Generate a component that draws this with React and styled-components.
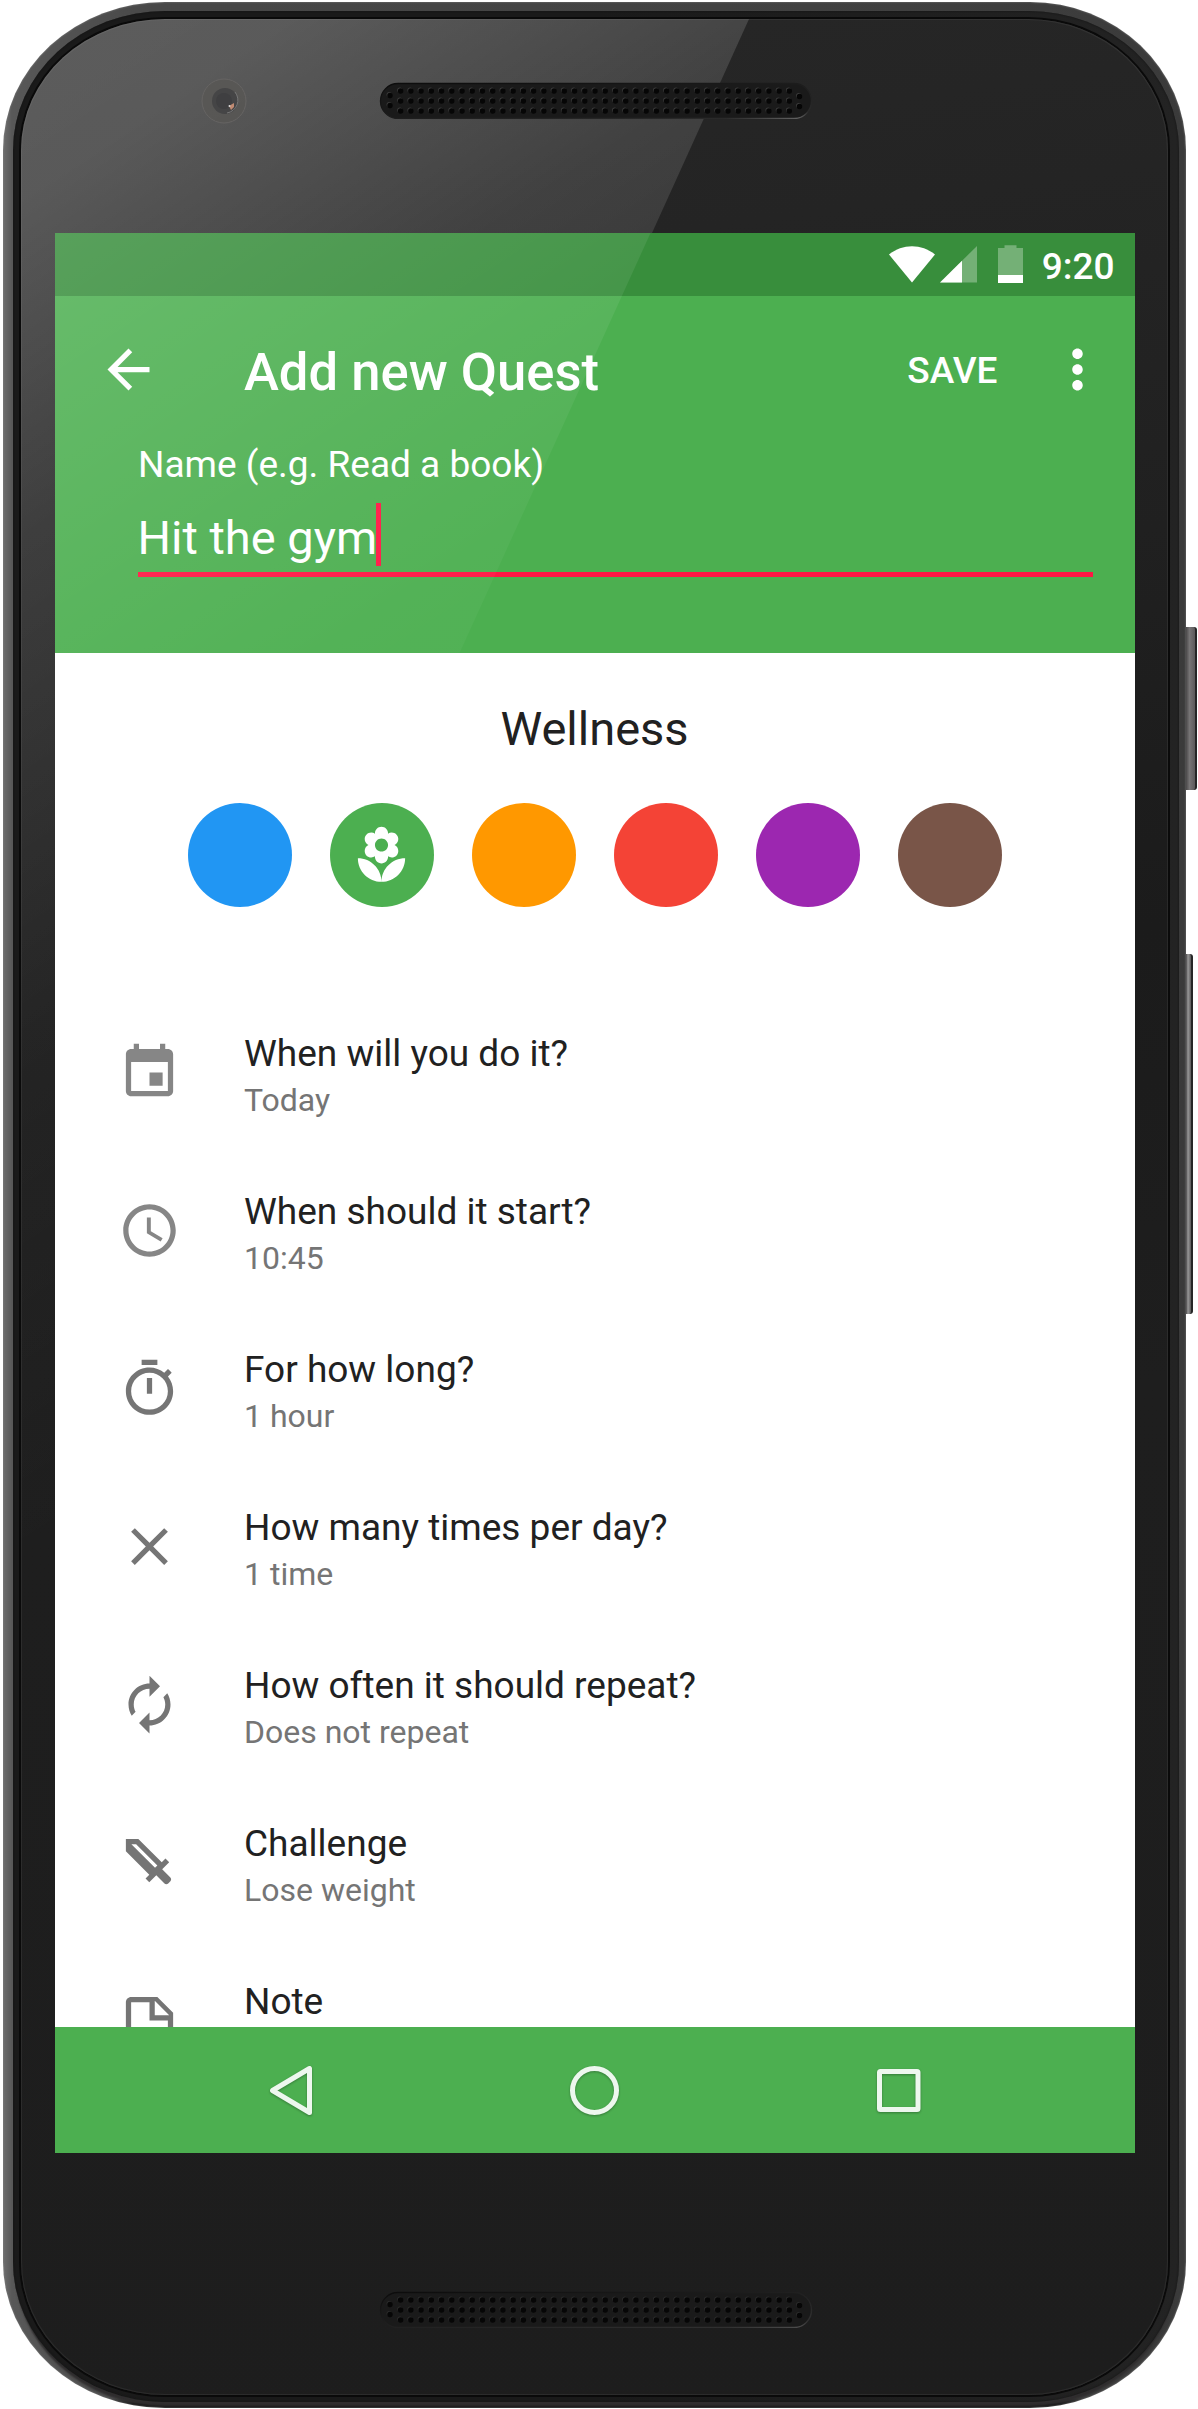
import React from 'react';
import styled, { createGlobalStyle } from 'styled-components';

const GlobalStyle = createGlobalStyle`
  *, *::before, *::after { box-sizing: border-box; }
  body {
    margin: 0;
    background: #fff;
    font-family: Roboto, "Liberation Sans", sans-serif;
  }
`;

/* ---------- device ---------- */

const Page = styled.main`
  display: flex;
  width: 1198px;
  height: 2409px;
  padding: 2px 0 0 3px;
  overflow: hidden;
`;

const Rim = styled.div`
  flex: none;
  width: 1183px;
  height: 2406px;
  padding: 9px 7px 6px 10px;
  border-radius: 162px 156px 156px 162px / 148px 148px 146px 146px;
  background:
    linear-gradient(to bottom, transparent 2396px, #161616 2402px),
    linear-gradient(to right, #6e6e6e 0, #585858 9px, #484848 150px, #404040 900px, #3a3a3a 100%);
  box-shadow: inset 0 0 2px #8a8a8a;
`;

const Gasket = styled.div`
  height: 100%;
  padding: 8px 11px 7px 8px;
  border-radius: 152px 150px 150px 152px / 139px 139px 140px 140px;
  background: linear-gradient(to right, #1a1a1a 0 50%, #232323 100%);
  box-shadow: inset 0 0 2px #111, 0 6px 2px -2px #2f2d2e;
`;

const Glass = styled.div`
  position: relative;
  display: flex;
  flex-direction: column;
  align-items: center;
  height: 100%;
  border-radius: 144px 140px 140px 144px / 131px 131px 133px 133px;
  background: linear-gradient(172deg, #272727 0, #222 20%, #1b1b1b 42%, #1e1e1e 60%, #1d1d1d 100%);
  box-shadow: 0 0 0 2px #0a0a0a, inset 0 0 1px 1px rgba(255, 255, 255, 0.07);
`;

const GlassGlare = styled.div`
  position: absolute;
  top: 0;
  left: 0;
  width: 728px;
  height: 1606px;
  border-top-left-radius: 144px 131px;
  clip-path: polygon(0 0, 100% 0, 0 100%);
  background: linear-gradient(
    147deg,
    rgba(255, 255, 255, 0.25) 0,
    rgba(255, 255, 255, 0.24) 150px,
    rgba(255, 255, 255, 0.13) 430px,
    rgba(255, 255, 255, 0.04) 860px,
    rgba(255, 255, 255, 0) 1300px
  );
`;

const TopBezel = styled.div`
  position: relative;
  display: flex;
  flex: none;
  align-items: flex-start;
  width: 1080px;
  height: 214px;
`;

const CameraArt = styled.svg`
  flex: none;
  width: 48px;
  height: 48px;
  margin: 58px 0 0 145px;
`;

const GrilleArt = styled.svg`
  display: block;
  flex: none;
  width: 436px;
  height: 40px;
`;

const EarpieceSlot = styled.div`
  margin: 60px 0 0 130px;
`;

const BottomBezel = styled.div`
  flex: 1;
  display: flex;
  width: 1080px;
  padding: 135px 0 0 323px;
`;

const SideRail = styled.div`
  display: flex;
  flex: none;
  flex-direction: column;
  gap: 164px;
  padding-top: 625px;
`;

const SideButton = styled.div`
  width: ${(p) => p.$width}px;
  height: ${(p) => p.$height}px;
  border-right: ${(p) => p.$edge}px solid #262626;
  border-radius: 0 3px 3px 0;
  background: linear-gradient(to right, #4a4849, ${(p) => p.$tone} 40%, #5c5a5b);
`;

/* ---------- screen ---------- */

const Screen = styled.section`
  position: relative;
  display: flex;
  flex: none;
  flex-direction: column;
  width: 1080px;
  height: 1920px;
  overflow: hidden;
  background: #fff;
`;

const ScreenGlare = styled.div`
  position: absolute;
  top: 0;
  left: 0;
  width: 596px;
  height: 420px;
  pointer-events: none;
  clip-path: polygon(0 0, 596px 0, 405px 100%, 0 100%);
  background: linear-gradient(
    147deg,
    rgba(255, 255, 255, 0.16) 0,
    rgba(255, 255, 255, 0.075) 340px,
    rgba(255, 255, 255, 0.04) 500px,
    rgba(255, 255, 255, 0.02) 700px
  );
`;

const StatusBar = styled.div`
  display: flex;
  flex: none;
  align-items: center;
  justify-content: flex-end;
  height: 63px;
  padding-right: 20px;
  background: #388e3c;
`;

const StatusArt = styled.svg`
  width: 136px;
  height: 63px;
`;

const Clock = styled.time`
  margin-left: 17px;
  padding-top: 4px;
  color: #fff;
  font-size: 37px;
  font-weight: 500;
  line-height: 43px;
`;

const Header = styled.header`
  flex: none;
  height: 357px;
  background: #4caf50;
  color: #fff;
`;

const Toolbar = styled.div`
  display: flex;
  align-items: center;
  height: 147px;
  padding: 0 26px 0 42px;
`;

const Icon = styled.svg`
  display: block;
  flex: none;
  width: 63px;
  height: 63px;
  fill: ${(p) => p.$color || '#fff'};
  fill-rule: evenodd;
`;

const Title = styled.h1`
  flex: 1;
  margin: 0 0 0 84.5px;
  padding-top: 4px;
  font-size: 52.6px;
  font-weight: 500;
  line-height: 62px;
`;

const SaveButton = styled.button`
  margin: 0 48px 0 0;
  padding: 2px 0 0;
  border: 0;
  background: none;
  color: #fff;
  font: 500 37px/43px Roboto, "Liberation Sans", sans-serif;
`;

const Field = styled.div`
  width: 955px;
  margin-left: 83px;
  border-bottom: 5px solid #ff1744;
`;

const FieldLabel = styled.div`
  height: 60px;
  padding-left: 0.5px;
  font-size: 37px;
  line-height: 43px;
`;

const FieldValue = styled.div`
  display: flex;
  align-items: center;
  height: 63px;
  margin-bottom: 6px;
  font-size: 47px;
  line-height: 55px;
`;

const FieldText = styled.span`
  padding-top: 5px;
`;

const Caret = styled.span`
  width: 5px;
  height: 63px;
  margin-left: -1px;
  background: #ff1744;
`;

const Category = styled.div`
  display: flex;
  flex: none;
  flex-direction: column;
  align-items: center;
  height: 340px;
  padding-top: 48px;
`;

const CategoryName = styled.h2`
  margin: 0;
  color: #212121;
  font-size: 47px;
  font-weight: 400;
  line-height: 56px;
`;

const Swatches = styled.div`
  display: flex;
  gap: 38px;
  margin-top: 46px;
`;

const Swatch = styled.button`
  display: flex;
  align-items: center;
  justify-content: center;
  width: 104px;
  height: 104px;
  padding: 0;
  border: 0;
  border-radius: 50%;
  background: ${(p) => p.$color};
`;

const Options = styled.ul`
  flex: 1;
  min-height: 0;
  margin: 0;
  padding: 0;
  overflow: hidden;
  list-style: none;
`;

const Option = styled.li`
  display: flex;
  align-items: center;
  height: 158px;
  padding-left: 63px;
`;

const OptionText = styled.div`
  margin-left: 63.5px;
  padding-top: 9px;
`;

const OptionTitle = styled.div`
  color: #212121;
  font-size: 37px;
  line-height: 43px;
`;

const OptionValue = styled.div`
  margin-top: 4px;
  color: #757575;
  font-size: 32px;
  line-height: 43px;
`;

const NavBar = styled.nav`
  display: flex;
  flex: none;
  align-items: center;
  justify-content: space-between;
  height: 126px;
  padding: 0 205px;
  background: #4caf50;
`;

const NavIcon = styled.svg`
  width: 63px;
  height: 63px;
  fill: none;
  stroke: #edf7ee;
  stroke-width: 5;
  filter: drop-shadow(0 1px 1px rgba(0, 0, 0, 0.3));
`;

/* ---------- data ---------- */

const PATHS = {
  back: 'M20 11H7.83l5.59-5.59L12 4l-8 8 8 8 1.41-1.41L7.83 13H20v-2z',
  more: 'M12 8c1.1 0 2-.9 2-2s-.9-2-2-2-2 .9-2 2 .9 2 2 2zm0 2c-1.1 0-2 .9-2 2s.9 2 2 2 2-.9 2-2-.9-2-2-2zm0 6c-1.1 0-2 .9-2 2s.9 2 2 2 2-.9 2-2-.9-2-2-2z',
  florist:
    'M12 22c4.97 0 9-4.03 9-9-4.97 0-9 4.03-9 9zM5.6 10.25c0 1.38 1.12 2.5 2.5 2.5.53 0 1.01-.16 1.42-.44l-.02.19c0 1.38 1.12 2.5 2.5 2.5s2.5-1.12 2.5-2.5l-.02-.19c.4.28.89.44 1.42.44 1.38 0 2.5-1.12 2.5-2.5 0-1-.59-1.85-1.43-2.25.84-.4 1.43-1.25 1.43-2.25 0-1.38-1.12-2.5-2.5-2.5-.53 0-1.01.16-1.42.44l.02-.19C14.5 2.12 13.38 1 12 1S9.5 2.12 9.5 3.5l.02.19c-.4-.28-.89-.44-1.42-.44-1.38 0-2.5 1.12-2.5 2.5 0 1 .59 1.85 1.43 2.25-.84.4-1.43 1.25-1.43 2.25zM12 5.5c1.38 0 2.5 1.12 2.5 2.5s-1.12 2.5-2.5 2.5S9.5 9.38 9.5 8s1.12-2.5 2.5-2.5zM3 13c0 4.97 4.03 9 9 9 0-4.97-4.03-9-9-9z',
  event:
    'M17 12h-5v5h5v-5zM16 1v2H8V1H6v2H5c-1.11 0-1.99.9-1.99 2L3 19c0 1.1.89 2 2 2h14c1.1 0 2-.9 2-2V5c0-1.1-.9-2-2-2h-1V1h-2zm3 18H5V8h14v11z',
  time: 'M11.99 2C6.47 2 2 6.48 2 12s4.47 10 9.99 10C17.52 22 22 17.52 22 12S17.52 2 11.99 2zM12 20c-4.42 0-8-3.58-8-8s3.58-8 8-8 8 3.58 8 8-3.58 8-8 8zm.5-13H11v6l5.25 3.15.75-1.23-4.5-2.67z',
  timer:
    'M15 1H9v2h6V1zm-4 13h2V8h-2v6zm8.03-6.61l1.42-1.42c-.43-.51-.9-.99-1.41-1.41l-1.42 1.42C16.07 4.74 14.12 4 12 4c-4.97 0-9 4.03-9 9s4.02 9 9 9 9-4.03 9-9c0-2.12-.74-4.07-1.97-5.61zM12 20c-3.87 0-7-3.13-7-7s3.13-7 7-7 7 3.13 7 7-3.13 7-7 7z',
  close:
    'M19 6.41L17.59 5 12 10.59 6.41 5 5 6.41 10.59 12 5 17.59 6.41 19 12 13.41 17.59 19 19 17.59 13.41 12z',
  renew:
    'M12 6v3l4-4-4-4v3c-4.42 0-8 3.58-8 8 0 1.57.46 3.03 1.24 4.26L6.7 14.8c-.45-.83-.7-1.79-.7-2.8 0-3.31 2.69-6 6-6zm6.76 1.74L17.3 9.2c.44.84.7 1.79.7 2.8 0 3.31-2.69 6-6 6v-3l-4 4 4 4v-3c4.42 0 8-3.58 8-8 0-1.57-.46-3.03-1.24-4.26z',
  sword:
    'M3 3h4.75l8.92 8.92 1.42-1.42 1.41 1.41-2.67 2.67 3.12 3.12c.4.4.4 1.03.01 1.42l-.84.84c-.39.39-1.02.39-1.41 0l-3.12-3.12-2.68 2.66-1.41-1.41 1.42-1.42L3 7.75zM5.1 5l9 9 .9-.9L6.9 5z',
  note: 'M14,10H19.5L14,4.5V10M5,3H15L21,9V19A2,2 0 0,1 19,21H5C3.89,21 3,20.1 3,19V5C3,3.89 3.89,3 5,3M5,5V19H19V12H12V5H5Z',
};

const CATEGORIES = [
  { name: 'Learning', color: '#2196f3' },
  { name: 'Wellness', color: '#4caf50', icon: 'florist' },
  { name: 'Personal', color: '#ff9800' },
  { name: 'Work', color: '#f44336' },
  { name: 'Fun', color: '#9c27b0' },
  { name: 'Chores', color: '#795548' },
];

const OPTIONS = [
  { icon: 'event', title: 'When will you do it?', value: 'Today', tint: '#868686' },
  { icon: 'time', title: 'When should it start?', value: '10:45', tint: '#868686' },
  { icon: 'timer', title: 'For how long?', value: '1 hour' },
  { icon: 'close', title: 'How many times per day?', value: '1 time' },
  { icon: 'renew', title: 'How often it should repeat?', value: 'Does not repeat' },
  { icon: 'sword', title: 'Challenge', value: 'Lose weight' },
  { icon: 'note', title: 'Note', value: '' },
];

/* ---------- parts ---------- */

function Glyph({ name, color }) {
  return (
    <Icon viewBox="0 0 24 24" $color={color}>
      <path d={PATHS[name]} />
    </Icon>
  );
}

const GRILLE_HOLES = [
  [12, 16.5],
  [12, 26.5],
  ...Array.from({ length: 39 }, (_, i) => [12, 22, 32].map((y) => [22.6 + i * 10.23, y])).flat(),
  [421.5, 17.5],
  [421.5, 27.5],
];

function Grille({ id, lit }) {
  return (
    <GrilleArt viewBox="0 0 436 40">
      <defs>
        <linearGradient id={id} x1="0" y1="0" x2="1" y2="1">
          <stop offset="0" stopColor="#0c0c0c" />
          <stop offset="0.9" stopColor={lit ? '#2a2a2a' : '#303030'} />
          <stop offset="1" stopColor={lit ? '#6a6a6a' : '#505050'} />
        </linearGradient>
      </defs>
      <rect x="2.5" y="4.5" width="431" height="35" rx="17.5" fill="#1a1a1a" stroke={`url(#${id})`} strokeWidth="1.4" />
      {GRILLE_HOLES.map(([x, y]) => (
        <g key={`${x}-${y}`}>
          <circle cx={x - 0.8} cy={y - 1} r="2.6" fill={lit ? '#3c3c3c' : '#2c2c2c'} />
          <circle cx={x} cy={y} r="2.7" fill="#060606" />
        </g>
      ))}
    </GrilleArt>
  );
}

function Camera() {
  return (
    <CameraArt viewBox="0 0 48 48">
      <circle cx="24" cy="24" r="22" fill="#585654" fillOpacity="0.6" stroke="#666463" strokeWidth="1" />
      <circle cx="25" cy="24" r="13" fill="#454546" />
      <circle cx="24" cy="24" r="8" fill="#3f3f41" />
      <path d="M35 15a13 13 0 0 1-8 21" fill="none" stroke="#777" strokeWidth="1" />
      <path d="M29 29l5-3v4l-3 3z" fill="#c08a72" />
      <circle cx="29.5" cy="29" r="1" fill="#ddd" />
    </CameraArt>
  );
}

function StatusIcons() {
  return (
    <StatusArt viewBox="0 0 136 63">
      <path d="M0 21.5C13.5 10.5 32.5 10.5 46 21.5L23 49.5z" fill="#fff" />
      <path d="M88 13v36.5H51z" fill="#fff" fillOpacity="0.3" />
      <path d="M73 27.8v21.7H51z" fill="#fff" />
      <path d="M115.5 12.3h12v2.7h6.5v27h-25V15h6.5z" fill="#fff" fillOpacity="0.3" />
      <path d="M109 42h25v8h-25z" fill="#fff" />
    </StatusArt>
  );
}

export default function App() {
  return (
    <>
      <GlobalStyle />
      <Page>
        <Rim>
          <Gasket>
            <Glass>
              <GlassGlare />
              <TopBezel>
                <Camera />
                <EarpieceSlot>
                  <Grille id="earpiece" lit />
                </EarpieceSlot>
              </TopBezel>
              <Screen>
                <StatusBar>
                  <StatusIcons />
                  <Clock>9:20</Clock>
                </StatusBar>
                <Header>
                  <Toolbar>
                    <Glyph name="back" />
                    <Title>Add new Quest</Title>
                    <SaveButton>SAVE</SaveButton>
                    <Glyph name="more" />
                  </Toolbar>
                  <Field>
                    <FieldLabel>Name (e.g. Read a book)</FieldLabel>
                    <FieldValue>
                      <FieldText>Hit the gym</FieldText>
                      <Caret />
                    </FieldValue>
                  </Field>
                </Header>
                <Category>
                  <CategoryName>Wellness</CategoryName>
                  <Swatches>
                    {CATEGORIES.map((c) => (
                      <Swatch key={c.name} $color={c.color}>
                        {c.icon && <Glyph name={c.icon} />}
                      </Swatch>
                    ))}
                  </Swatches>
                </Category>
                <Options>
                  {OPTIONS.map((o) => (
                    <Option key={o.title}>
                      <Glyph name={o.icon} color={o.tint || '#757575'} />
                      <OptionText>
                        <OptionTitle>{o.title}</OptionTitle>
                        <OptionValue>{o.value || '\u00a0'}</OptionValue>
                      </OptionText>
                    </Option>
                  ))}
                </Options>
                <NavBar>
                  <NavIcon viewBox="0 0 63 63">
                    <path d="M12.5 31.5L49.5 9.5v44z" strokeLinejoin="round" />
                  </NavIcon>
                  <NavIcon viewBox="0 0 63 63">
                    <circle cx="31.5" cy="31.5" r="22" />
                  </NavIcon>
                  <NavIcon viewBox="0 0 63 63">
                    <rect x="12.5" y="12.5" width="38.5" height="38" rx="1" />
                  </NavIcon>
                </NavBar>
                <ScreenGlare />
              </Screen>
              <BottomBezel>
                <Grille id="loudspeaker" />
              </BottomBezel>
            </Glass>
          </Gasket>
        </Rim>
        <SideRail>
          <SideButton $width={11} $height={163} $edge={2} $tone="#777576" />
          <SideButton $width={7} $height={360} $edge={2} $tone="#999" />
        </SideRail>
      </Page>
    </>
  );
}
